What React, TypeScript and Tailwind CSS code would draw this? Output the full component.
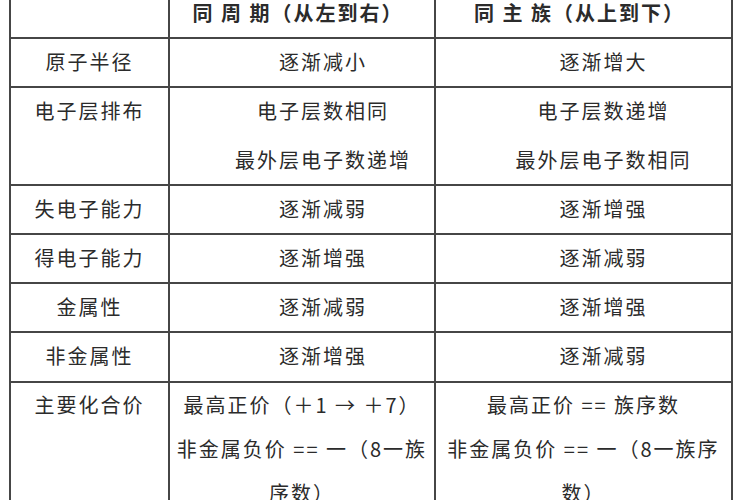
const font = { fontFamily: '"Noto Sans CJK SC", "Noto Sans", sans-serif' }

const rows = [
  { name: '原子半径', period: ['逐渐减小'], group: ['逐渐增大'], h: 'h-[49px]' },
  { name: '电子层排布', period: ['电子层数相同', '最外层电子数递增'], group: ['电子层数递增', '最外层电子数相同'], h: 'h-[98px]' },
  { name: '失电子能力', period: ['逐渐减弱'], group: ['逐渐增强'], h: 'h-[49px]' },
  { name: '得电子能力', period: ['逐渐增强'], group: ['逐渐减弱'], h: 'h-[49px]' },
  { name: '金属性', period: ['逐渐减弱'], group: ['逐渐增强'], h: 'h-[49px]' },
  { name: '非金属性', period: ['逐渐增强'], group: ['逐渐减弱'], h: 'h-[50px]' },
]

const cell = 'border-2 border-[#464646] p-0 align-top'

export default function App() {
  return (
    <div className="w-[750px] h-[500px] overflow-hidden bg-white text-[#2b2b2b]" style={font}>
      <table className="-mt-[14px] ml-[9px] w-[722px] table-fixed border-collapse text-[20px] tracking-[2px]">
        <colgroup>
          <col className="w-[159px]" />
          <col className="w-[266px]" />
          <col className="w-[297px]" />
        </colgroup>
        <tbody>
          <tr className="h-[51px]">
            <td className={cell}></td>
            <td className={`${cell} !align-middle text-center font-bold`}>
              <span className="pr-2">同 周 期（从左到右）</span>
            </td>
            <td className={`${cell} !align-middle text-center font-bold`}>
              <span className="pr-2">同 主 族（从上到下）</span>
            </td>
          </tr>
          {rows.map(r => (
            <tr key={r.name} className={r.h}>
              <td className={`${cell} text-center`}>
                <div className="leading-[45px]">{r.name}</div>
              </td>
              <td className={`${cell} text-center pl-[42px]`}>
                {r.period.map((t, i) => (
                  <div key={t} className={i > 0 ? 'mt-[4px] leading-[45px]' : 'leading-[45px]'}>{t}</div>
                ))}
              </td>
              <td className={`${cell} text-center pl-10`}>
                {r.group.map((t, i) => (
                  <div key={t} className={i > 0 ? 'mt-[4px] leading-[45px]' : 'leading-[45px]'}>{t}</div>
                ))}
              </td>
            </tr>
          ))}
          <tr className="h-[160px]">
            <td className={`${cell} text-center`}>
              <div className="leading-[44px]">主要化合价</div>
            </td>
            <td className={`${cell} text-center`}>
              <div className="leading-[44px] whitespace-nowrap">最高正价（＋1 → ＋7）</div>
              <div className="leading-[44px] whitespace-nowrap">非金属负价 == 一（8一族</div>
              <div className="leading-[44px]">序数）</div>
            </td>
            <td className={`${cell} text-center`}>
              <div className="leading-[44px] whitespace-nowrap">最高正价 == 族序数</div>
              <div className="leading-[44px] whitespace-nowrap">非金属负价 == 一（8一族序</div>
              <div className="leading-[44px]">数）</div>
            </td>
          </tr>
        </tbody>
      </table>
    </div>
  )
}
